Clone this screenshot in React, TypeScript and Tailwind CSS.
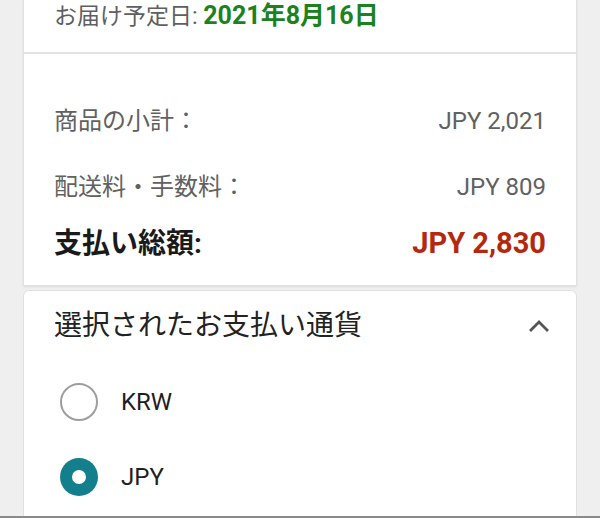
const font = { fontFamily: 'Roboto, "Noto Sans CJK JP", sans-serif' };

function Radio({ checked }: { checked: boolean }) {
  if (checked) {
    return (
      <span className="flex h-[38px] w-[38px] items-center justify-center rounded-full bg-[#137f8c]">
        <span className="h-[14px] w-[14px] rounded-full bg-white" />
      </span>
    );
  }
  return <span className="h-[38px] w-[38px] rounded-full border-2 border-[#9e9e9e] bg-white" />;
}

export default function App() {
  const currencies = [
    { code: 'KRW', checked: false },
    { code: 'JPY', checked: true },
  ];

  return (
    <div className="relative h-[518px] w-[600px] overflow-hidden bg-[#efefef]" style={font}>
      <div className="mx-[23px] border-x border-b border-[#e0e0e0] bg-white shadow-[0_1px_2px_rgba(0,0,0,0.08)]">
        {/* Delivery date */}
        <div className="h-[54px] border-b-2 border-[#e3e3e3] px-[30px]">
          <p className="text-[23px] leading-[32px] text-[#5f5f5f]">
            お届け予定日: <span className="text-[25px] font-bold text-[#1b821d]">2021年8月16日</span>
          </p>
        </div>

        {/* Totals */}
        <div className="px-[30px] pt-[47px] pb-[21px]">
          <div className="flex h-[40px] items-center justify-between text-[24px] text-[#616161]">
            <span>商品の小計：</span>
            <span>JPY 2,021</span>
          </div>
          <div className="mt-[26px] flex h-[40px] items-center justify-between text-[24px] text-[#616161]">
            <span>配送料・手数料：</span>
            <span>JPY 809</span>
          </div>
          <div className="mt-[17px] flex h-[40px] items-center justify-between font-bold">
            <span className="text-[28px] text-[#1a1a1a]">支払い総額:</span>
            <span className="text-[29px] text-[#b3280e]">JPY 2,830</span>
          </div>
        </div>
      </div>

      {/* Currency selector */}
      <div className="mx-[23px] mt-[4px] h-[240px] rounded-t-[6px] border-x border-t border-[#e0e0e0] bg-white px-[30px] pt-[15px]">
        <div className="flex h-[40px] items-center justify-between">
          <span className="text-[28px] text-[#222]">選択されたお支払い通貨</span>
          <svg width="22" height="14" viewBox="0 0 22 14" className="mr-[-4px]">
            <path d="M2 12 L11 3 L20 12" fill="none" stroke="#555" strokeWidth="2.8" />
          </svg>
        </div>
        <div className="mt-[37px] flex flex-col gap-[37px]">
          {currencies.map((c) => (
            <div key={c.code} className="flex h-[38px] items-center gap-[23px] pl-[6px]">
              <Radio checked={c.checked} />
              <span className="text-[24px] text-[#1f1f1f]">{c.code}</span>
            </div>
          ))}
        </div>
      </div>

      <div className="absolute bottom-0 left-0 h-[2px] w-full bg-[#8a8a8a]" />
    </div>
  );
}
